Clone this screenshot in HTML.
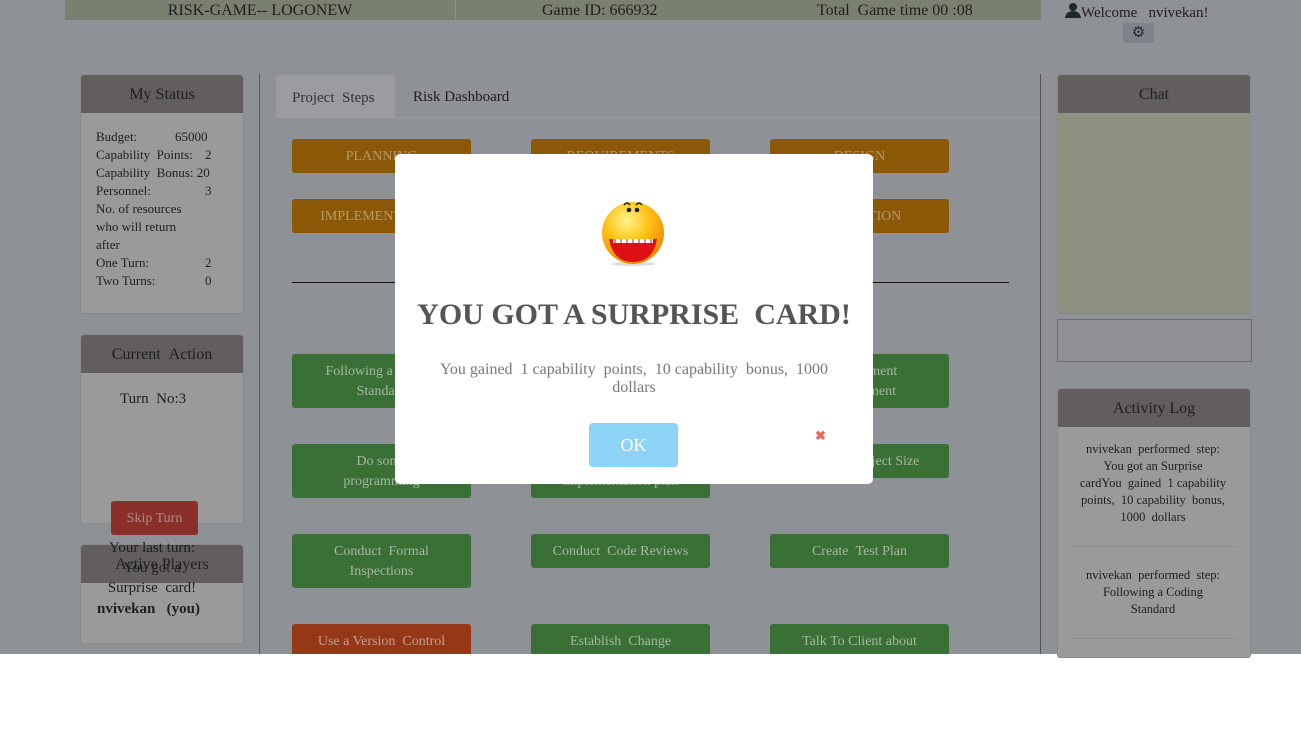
<!DOCTYPE html>
<html><head><meta charset="utf-8"><style>
*{margin:0;padding:0;box-sizing:border-box}
body{width:1301px;height:748px;background:#fff;font-family:"Liberation Serif",serif;position:relative;overflow:hidden}
#pg{position:absolute;left:0;top:0;width:1301px;height:654px;background:#8e9196}
.a{position:absolute}
.hdr{background:#7a8070;height:20px;top:0;color:#1e1e1e;font-size:16px;text-align:center;line-height:22px}
.pan{position:absolute;background:#9a9a9a;border-radius:3px;border:1px solid #8a8a8a}
.ph{background:#625e60;height:38px;color:#1e1e1e;font-size:16px;text-align:center;line-height:40px;border-radius:3px 3px 0 0}
.btn{position:absolute;width:179px;border-radius:3px;color:#a6b8a2;font-size:14px;text-align:center;line-height:20px;padding-top:8px}
.o{background:#8a5806;color:#b89a6a;height:34px}
.g{background:#3a7036}
.st{font-size:13px;color:#1e1e1e;line-height:18px}
</style></head><body>
<div id="pg">
<div class="a hdr" style="left:65px;width:390px">RISK-GAME-- LOGONEW</div>
<div class="a hdr" style="left:456px;width:585px;text-align:left;padding-left:86px">Game ID: 666932<span style="position:absolute;left:361px">Total &nbsp;Game time 00 :08</span></div>
<div class="a" style="left:1065px;top:2px;font-size:15px;color:#1e1e1e"><svg width="16" height="16" viewBox="0 0 16 16" style="vertical-align:-1px"><circle cx="8" cy="5" r="4" fill="#1a2a2a"/><path d="M0 16 Q1 9 8 9 Q15 9 16 16Z" fill="#1a2a2a"/></svg>Welcome &nbsp;&nbsp;nvivekan!</div>
<div class="a" style="left:1123px;top:23px;width:31px;height:20px;background:#7f8288;text-align:center;color:#1a2a2a;font-size:15px;line-height:20px">⚙</div>

<div class="pan" style="left:80px;top:74px;width:164px;height:240px"><div class="ph">My Status</div>
<div class="st" style="padding:15px 0 0 15px">
<div>Budget:<span style="position:absolute;left:94px">65000</span></div>
<div>Capability &nbsp;Points:<span style="position:absolute;left:124px">2</span></div>
<div>Capability &nbsp;Bonus: 20</div>
<div>Personnel:<span style="position:absolute;left:124px">3</span></div>
<div>No. of resources<br>who will return<br>after</div>
<div>One Turn:<span style="position:absolute;left:124px">2</span></div>
<div>Two Turns:<span style="position:absolute;left:124px">0</span></div>
</div></div>

<div class="pan" style="left:80px;top:334px;width:164px;height:190px"><div class="ph">Current &nbsp;Action</div>
<div style="font-size:15px;color:#1e1e1e;padding:18px 0 0 39px">Turn &nbsp;No:3</div></div>
<div class="pan" style="left:80px;top:544px;width:164px;height:100px"><div class="ph">Active Players</div>
<div style="font-size:15px;color:#1e1e1e;font-weight:bold;padding:18px 0 0 16px">nvivekan &nbsp;&nbsp;(you)</div></div>
<div class="a" style="left:111px;top:501px;width:87px;height:34px;background:#8a2f2a;border-radius:3px;color:#b08a88;font-size:14px;text-align:center;line-height:36px">Skip Turn</div>
<div class="a" style="left:90px;top:538px;width:124px;text-align:center;font-size:15px;line-height:20px;color:#1e1e1e">Your last turn:<br>You got a<br>Surprise &nbsp;card!</div>

<div class="a" style="left:259px;top:74px;width:1px;height:580px;background:#555"></div>
<div class="a" style="left:1040px;top:74px;width:1px;height:580px;background:#555"></div>
<div class="a" style="left:276px;top:75px;width:119px;height:43px;background:#9a9ca0;border-radius:3px 3px 0 0;font-size:15px;color:#333;line-height:46px;padding-left:16px">Project &nbsp;Steps</div>
<div class="a" style="left:413px;top:89px;font-size:15px;color:#1e1e1e">Risk Dashboard</div>
<div class="a" style="left:395px;top:117px;width:645px;height:1px;background:#9a9ca0"></div>

<div class="btn o" style="left:292px;top:139px">PLANNING</div>
<div class="btn o" style="left:531px;top:139px">REQUIREMENTS</div>
<div class="btn o" style="left:770px;top:139px">DESIGN</div>
<div class="btn o" style="left:292px;top:199px">IMPLEMENTATION</div>
<div class="btn o" style="left:770px;top:199px">VALIDATION</div>
<div class="a" style="left:292px;top:282px;width:717px;height:1px;background:#111"></div>
<div class="btn g" style="left:292px;top:354px;height:54px">Following a Coding<br>Standard</div>
<div class="btn g" style="left:770px;top:354px;height:54px">Development<br>Environment</div>
<div class="btn g" style="left:292px;top:444px;height:54px">Do some<br>programming</div>
<div class="btn g" style="left:531px;top:444px;height:54px">Create an<br>implementation plan</div>
<div class="btn g" style="left:770px;top:444px;height:34px">Estimate Project Size</div>
<div class="btn g" style="left:292px;top:534px;height:54px">Conduct &nbsp;Formal<br>Inspections</div>
<div class="btn g" style="left:531px;top:534px;height:34px">Conduct &nbsp;Code Reviews</div>
<div class="btn g" style="left:770px;top:534px;height:34px">Create &nbsp;Test Plan</div>
<div class="btn" style="left:292px;top:624px;height:30px;background:#943818;border-radius:3px 3px 0 0;color:#c0a090">Use a Version &nbsp;Control</div>
<div class="btn g" style="left:531px;top:624px;height:30px;border-radius:3px 3px 0 0">Establish &nbsp;Change</div>
<div class="btn g" style="left:770px;top:624px;height:30px;border-radius:3px 3px 0 0">Talk To Client about</div>

<div class="pan" style="left:1057px;top:74px;width:194px;height:240px;background:#8f9180"><div class="ph">Chat</div></div>
<div class="a" style="left:1057px;top:319px;width:195px;height:43px;border:1px solid #6e6e6e;background:#8e9096"></div>
<div class="pan" style="left:1057px;top:388px;width:194px;height:270px"><div class="ph">Activity Log</div>
<div style="font-size:12.5px;color:#1e1e1e;text-align:center;line-height:17px;padding:14px 16px 0 14px">nvivekan &nbsp;performed &nbsp;step:<br>You got an Surprise<br>cardYou &nbsp;gained &nbsp;1 capability points, &nbsp;10 capability &nbsp;bonus, 1000 &nbsp;dollars</div>
<div style="margin:20px 14px 0;height:1px;background:#8e8e8e"></div>
<div style="font-size:12.5px;color:#1e1e1e;text-align:center;line-height:17px;padding:20px 16px 0 14px">nvivekan &nbsp;performed &nbsp;step:<br>Following a Coding<br>Standard</div>
<div style="margin:20px 14px 0;height:1px;background:#8e8e8e"></div>
</div>
</div>

<div class="a" style="left:395px;top:154px;width:478px;height:330px;background:#fff;border-radius:5px">
<svg class="a" style="left:206px;top:43px" width="64" height="70" viewBox="0 0 64 70">
<defs><radialGradient id="f" cx="0.4" cy="0.3" r="0.7"><stop offset="0" stop-color="#fff58a"/><stop offset="0.5" stop-color="#ffc21a"/><stop offset="1" stop-color="#f08a00"/></radialGradient></defs>
<ellipse cx="32" cy="67" rx="22" ry="2" fill="#ddd"/>
<circle cx="32" cy="36" r="31" fill="url(#f)"/>
<path d="M23 8 q3-4 6 0 M35 8 q3-4 6 0" stroke="#222" stroke-width="1.5" fill="none"/>
<circle cx="28" cy="13" r="2.3" fill="#222"/><circle cx="36" cy="13" r="2.3" fill="#222"/>
<path d="M8 42 L56 42 Q52 65 32 65 Q12 65 8 42Z" fill="#d11"/>
<path d="M12 42h40v4H12z" fill="#fff"/>
<path d="M14 42v4M20 42v4M26 42v4M32 42v4M38 42v4M44 42v4M50 42v4" stroke="#d11" stroke-width="1"/>
</svg>
<div class="a" style="left:0;top:144px;width:478px;text-align:center;font-size:30px;font-weight:bold;color:#555">YOU GOT A SURPRISE &nbsp;CARD!</div>
<div class="a" style="left:30px;top:207px;width:418px;text-align:center;font-size:16px;line-height:18px;color:#777">You gained &nbsp;1 capability &nbsp;points, &nbsp;10 capability &nbsp;bonus, &nbsp;1000 dollars</div>
<div class="a" style="left:194px;top:269px;width:89px;height:44px;background:#8dd3f5;border-radius:4px;color:#fff;font-size:18px;text-align:center;line-height:44px">OK</div>
<div class="a" style="left:420px;top:274px;color:#e96a5a;font-size:13px;font-weight:bold">✖</div>
</div>
</body></html>
